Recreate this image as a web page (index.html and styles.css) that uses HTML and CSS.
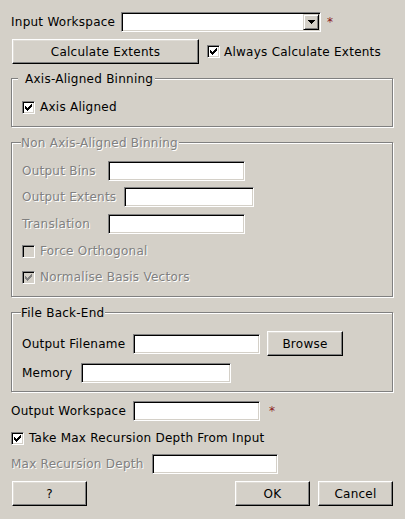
FILE: index.html
```html
<!DOCTYPE html>
<html>
<head>
<meta charset="utf-8">
<link rel="stylesheet" href="styles.css">
</head>
<body>
<div class="dlg">
  <div class="row r1">
    <span class="lbl lw-input">Input Workspace</span>
    <div class="combo"><div class="combo-btn"><svg width="7" height="4" viewBox="0 0 7 4" shape-rendering="crispEdges"><path d="M0 0h7v1H0z M1 1h5v1H1z M2 2h3v1H2z M3 3h1v1H3z" fill="#000"/></svg></div></div>
    <span class="req req1">*</span>
  </div>
  <div class="row r2">
    <div class="btn btn-calc">Calculate Extents</div>
    <div class="chk chk-always">
      <span class="cb"><svg width="11" height="11" viewBox="0 0 11 11" shape-rendering="crispEdges"><path d="M2 4h1v3H2z M3 5h1v3H3z M4 6h1v3H4z M5 5h1v3H5z M6 4h1v3H6z M7 3h1v3H7z M8 2h1v3H8z" fill="#000"/></svg></span>
      <span>Always Calculate Extents</span>
    </div>
  </div>

  <div class="group g1">
    <span class="gtitle gt1">Axis-Aligned Binning</span>
    <div class="chk">
      <span class="cb"><svg width="11" height="11" viewBox="0 0 11 11" shape-rendering="crispEdges"><path d="M2 4h1v3H2z M3 5h1v3H3z M4 6h1v3H4z M5 5h1v3H5z M6 4h1v3H6z M7 3h1v3H7z M8 2h1v3H8z" fill="#000"/></svg></span>
      <span>Axis Aligned</span>
    </div>
  </div>

  <div class="group g2">
    <span class="gtitle dis">Non Axis-Aligned Binning</span>
    <div class="row frow">
      <span class="lbl dis lw-bins">Output Bins</span>
      <div class="field fw-bins"></div>
    </div>
    <div class="row frow">
      <span class="lbl dis lw-ext">Output Extents</span>
      <div class="field fw-ext"></div>
    </div>
    <div class="row frow frow-tr">
      <span class="lbl dis lw-bins">Translation</span>
      <div class="field fw-bins"></div>
    </div>
    <div class="row crow">
      <div class="chk dis">
        <span class="cb cb-dis"></span>
        <span>Force Orthogonal</span>
      </div>
    </div>
    <div class="row crow">
      <div class="chk dis">
        <span class="cb cb-dis"><svg width="11" height="11" viewBox="0 0 11 11" shape-rendering="crispEdges"><path d="M2 4h1v3H2z M3 5h1v3H3z M4 6h1v3H4z M5 5h1v3H5z M6 4h1v3H6z M7 3h1v3H7z M8 2h1v3H8z" fill="#808080"/></svg></span>
        <span>Normalise Basis Vectors</span>
      </div>
    </div>
  </div>

  <div class="group g3">
    <span class="gtitle">File Back-End</span>
    <div class="row brow">
      <span class="lbl lw-file">Output Filename</span>
      <div class="field fw-file"></div>
      <div class="btn btn-browse">Browse</div>
    </div>
    <div class="row frow">
      <span class="lbl lw-mem">Memory</span>
      <div class="field fw-mem"></div>
    </div>
  </div>

  <div class="row r-out">
    <span class="lbl lw-out">Output Workspace</span>
    <div class="field fw-file"></div>
    <span class="req req2">*</span>
  </div>
  <div class="row crow r-take">
    <div class="chk">
      <span class="cb"><svg width="11" height="11" viewBox="0 0 11 11" shape-rendering="crispEdges"><path d="M2 4h1v3H2z M3 5h1v3H3z M4 6h1v3H4z M5 5h1v3H5z M6 4h1v3H6z M7 3h1v3H7z M8 2h1v3H8z" fill="#000"/></svg></span>
      <span>Take Max Recursion Depth From Input</span>
    </div>
  </div>
  <div class="row r-max">
    <span class="lbl dis lw-max">Max Recursion Depth</span>
    <div class="field fw-max"></div>
  </div>
  <div class="row r-btns">
    <div class="btn btn-dlg btn-help">?</div>
    <div class="spacer"></div>
    <div class="btn btn-dlg">OK</div>
    <div class="btn btn-dlg btn-cancel">Cancel</div>
  </div>
</div>
</body>
</html>
```

FILE: styles.css
```css
* { box-sizing: border-box; }
html, body {
  margin: 0;
  padding: 0;
  background: #d4d0c8;
}
body {
  width: 405px;
  height: 519px;
  overflow: hidden;
  font-family: "DejaVu Sans", sans-serif;
  font-size: 12px;
  line-height: 14px;
  letter-spacing: 0.25px;
  color: #000;
}
.dlg {
  padding: 0 12px 0 11px;
}
.row {
  display: flex;
  align-items: center;
}
.lbl {
  flex: none;
  white-space: nowrap;
}
.dis {
  color: #808080;
  text-shadow: 1px 1px 0 #fff;
}

/* sunken field */
.field, .combo {
  flex: none;
  height: 20px;
  background: #fff;
  border: 1px solid;
  border-color: #808080 #fff #fff #808080;
  box-shadow: inset 1px 1px 0 #000, inset -1px -1px 0 #d4d0c8;
}
.combo {
  width: 200px;
  display: flex;
  justify-content: flex-end;
  padding: 1px;
}
.combo-btn {
  width: 16px;
  height: 16px;
  border: 1px solid;
  border-color: #d4d0c8 #000 #000 #d4d0c8;
  box-shadow: inset 1px 1px 0 #fff, inset -1px -1px 0 #808080;
  background: #d4d0c8;
  display: flex;
  align-items: center;
  justify-content: center;
}
.combo-btn svg { display: block; }

/* raised button */
.btn {
  flex: none;
  height: 25px;
  display: flex;
  align-items: center;
  justify-content: center;
  background: #d4d0c8;
  border: 1px solid;
  border-color: #fff #000 #000 #fff;
  box-shadow: inset -1px -1px 0 #808080, inset 1px 1px 0 #dfdcd6;
  white-space: nowrap;
}

.req {
  color: #8b1a1a;
  font-size: 12px;
}

/* checkbox */
.chk {
  display: flex;
  align-items: center;
  gap: 5px;
  white-space: nowrap;
}
.cb {
  flex: none;
  width: 13px;
  height: 13px;
  background: #fff;
  border: 1px solid;
  border-color: #808080 #fff #fff #808080;
  box-shadow: inset 1px 1px 0 #000, inset -1px -1px 0 #d4d0c8;
  position: relative;
}
.cb svg {
  display: block;
  position: absolute;
  left: 0;
  top: 0;
}
.cb-dis { background: #d4d0c8; }

/* group boxes */
.group {
  position: relative;
  width: 382px;
  border: 1px solid #808080;
  box-shadow: 1px 1px 0 #fff, inset 1px 1px 0 #fff;
  padding-left: 10px;
}
.gtitle {
  position: absolute;
  top: -7px;
  left: 9px;
  background: #d4d0c8;
  padding: 0 1px 0 0;
  white-space: nowrap;
}
.gt1 {
  left: 6px;
  padding: 0 2px 0 7px;
}

/* row 1 */
.r1 { margin-top: 12px; height: 20px; }
.lw-input { width: 110px; }
.req1 { margin-left: 6px; }

/* row 2 */
.r2 { margin-top: 7px; height: 25px; }
.btn-calc { width: 187px; margin-left: 1px; }
.chk-always { margin-left: 8px; gap: 4px; }

/* group 1 */
.g1 {
  margin-top: 14px;
  height: 49px;
  padding-top: 21px;
}

/* group 2 */
.g2 {
  margin-top: 15px;
  height: 155px;
  padding-top: 18px;
}
.frow { height: 20px; }
.frow + .frow { margin-top: 6px; }
.frow-tr { margin-top: 7px !important; }
.crow {
  height: 20px;
  margin-top: 6px;
  align-items: flex-start;
  padding-top: 4px;
}
.lw-bins { width: 86px; }
.fw-bins { width: 137px; }
.lw-ext { width: 102px; }
.fw-ext { width: 130px; }

/* group 3 */
.g3 {
  margin-top: 15px;
  height: 80px;
  padding-top: 18px;
}
.brow { height: 25px; }
.brow + .frow { margin-top: 7px; }
.lw-file { width: 111px; }
.fw-file { width: 127px; }
.btn-browse { width: 76px; margin-left: 7px; }
.lw-mem { width: 59px; }
.fw-mem { width: 150px; }

/* bottom */
.r-out { margin-top: 9px; height: 20px; }
.lw-out { width: 122px; }
.req2 { margin-left: 9px; }
.r-take { margin-top: 6px; }
.r-max { margin-top: 7px; height: 20px; }
.lw-max { width: 141px; }
.fw-max { width: 126px; }
.r-btns { margin-top: 7px; height: 25px; }
.btn-dlg { width: 75px; }
.btn-help { margin-left: 1px; }
.spacer { flex: 1; }
.btn-cancel { margin-left: 8px; }
```
